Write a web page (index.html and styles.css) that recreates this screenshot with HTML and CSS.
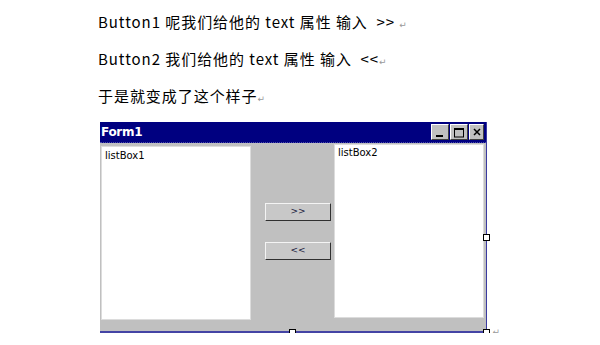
FILE: index.html
```html
<!DOCTYPE html>
<html>
<head>
<meta charset="utf-8">
<link rel="stylesheet" href="styles.css">
</head>
<body>
<div class="doc">
  <p class="line">Button1 呢我们给他的 text 属性 输入 &nbsp;&gt;&gt; <span class="ret">↵</span></p>
  <p class="line">Button2 我们给他的 text 属性 输入 &nbsp;&lt;&lt;<span class="ret">↵</span></p>
  <p class="line">于是就变成了这个样子<span class="ret">↵</span></p>
</div>
<div class="form-wrap">
  <div class="form">
    <div class="titlebar">
      <span class="title">Form1</span>
      <div class="ctrls">
        <span class="cbtn"><svg width="10" height="10" viewBox="0 0 10 10"><rect x="1" y="8" width="7" height="2" fill="#000"/></svg></span>
        <span class="cbtn"><svg width="12" height="11" viewBox="0 0 12 11"><rect x="1.5" y="1.5" width="9" height="8.5" fill="none" stroke="#000" stroke-width="1"/><rect x="1" y="1" width="10" height="2" fill="#000"/></svg></span>
        <span class="cbtn close"><svg width="10" height="10" viewBox="0 0 10 10"><path d="M2 2 L8 8 M8 2 L2 8" stroke="#000" stroke-width="1.5"/></svg></span>
      </div>
    </div>
    <div class="client">
      <div class="listbox lb1">listBox1</div>
      <div class="mid">
        <div class="btn">&gt;&gt;</div>
        <div class="btn">&lt;&lt;</div>
      </div>
      <div class="listbox lb2">listBox2</div>
    </div>
    <span class="handle h-right"></span>
    <span class="handle h-bottom"></span>
    <span class="handle h-corner"></span>
    <span class="ret corner-ret">↵</span>
  </div>
</div>
</body>
</html>
```
FILE: styles.css
```css
html, body {
  margin: 0;
  padding: 0;
  background: #fff;
}
.doc {
  padding: 9px 0 0 98px;
  font-family: "Noto Sans CJK SC", sans-serif;
  font-size: 15px;
  color: #000;
}
.line {
  margin: 0;
  height: 37px;
  line-height: 26px;
  letter-spacing: 0.95px;
}
.ret {
  font-family: "DejaVu Sans", sans-serif;
  font-size: 9px;
  color: #999;
  letter-spacing: 0;
}
.form-wrap {
  padding: 2px 0 0 100px;
}
.form {
  position: relative;
  width: 386px;
  border-right: 1px solid #3a3aa0;
  border-bottom: 2px solid #4444a4;
  box-sizing: content-box;
}
.titlebar {
  height: 21px;
  background: #000080;
  border-bottom: 1px dotted #4a4ab0;
  display: flex;
  align-items: center;
  justify-content: space-between;
  box-sizing: border-box;
}
.title {
  font-family: "DejaVu Sans", sans-serif;
  font-weight: bold;
  font-size: 12px;
  color: #fff;
  padding-left: 1px;
  letter-spacing: -0.3px;
}
.ctrls {
  display: flex;
  gap: 1px;
  padding-right: 2px;
}
.cbtn {
  width: 18px;
  height: 16px;
  background: #c0c0c0;
  border-top: 1px solid #fff;
  border-left: 1px solid #fff;
  border-right: 1px solid #404040;
  border-bottom: 1px solid #404040;
  box-sizing: border-box;
  display: flex;
  align-items: center;
  justify-content: center;
}
.cbtn.close {
  width: 15px;
}
.client {
  height: 188px;
  background: #c0c0c0;
  display: flex;
  align-items: flex-start;
}
.listbox {
  background: #fff;
  border: 1px solid #dcdcdc;
  box-sizing: border-box;
  font-family: "DejaVu Sans", sans-serif;
  font-size: 10px;
  color: #000;
  padding: 2px 0 0 3px;
}
.lb1 {
  width: 150px;
  height: 174px;
  margin: 3px 0 0 1px;
  padding-top: 3px;
}
.lb2 {
  width: 150px;
  height: 174px;
  margin: 1px 0 0 0;
}
.mid {
  width: 83px;
  display: flex;
  flex-direction: column;
  align-items: flex-start;
  gap: 21px;
  padding: 60px 0 0 14px;
  box-sizing: border-box;
}
.btn {
  width: 66px;
  height: 18px;
  background: #c8c8c8;
  border-top: 1px solid #f4f4f4;
  border-left: 1px solid #f4f4f4;
  border-right: 1px solid #303030;
  border-bottom: 1px solid #303030;
  box-sizing: border-box;
  font-family: "DejaVu Sans", sans-serif;
  font-size: 9px;
  line-height: 15px;
  color: #202040;
  text-align: center;
}
.handle {
  position: absolute;
  width: 5px;
  height: 5px;
  background: #fff;
  border: 1px solid #000;
}
.h-right {
  right: -4px;
  top: 112px;
}
.h-bottom {
  left: 189px;
  bottom: -5px;
}
.h-corner {
  right: -4px;
  bottom: -5px;
}
.corner-ret {
  position: absolute;
  right: -14px;
  bottom: -6px;
}
```
